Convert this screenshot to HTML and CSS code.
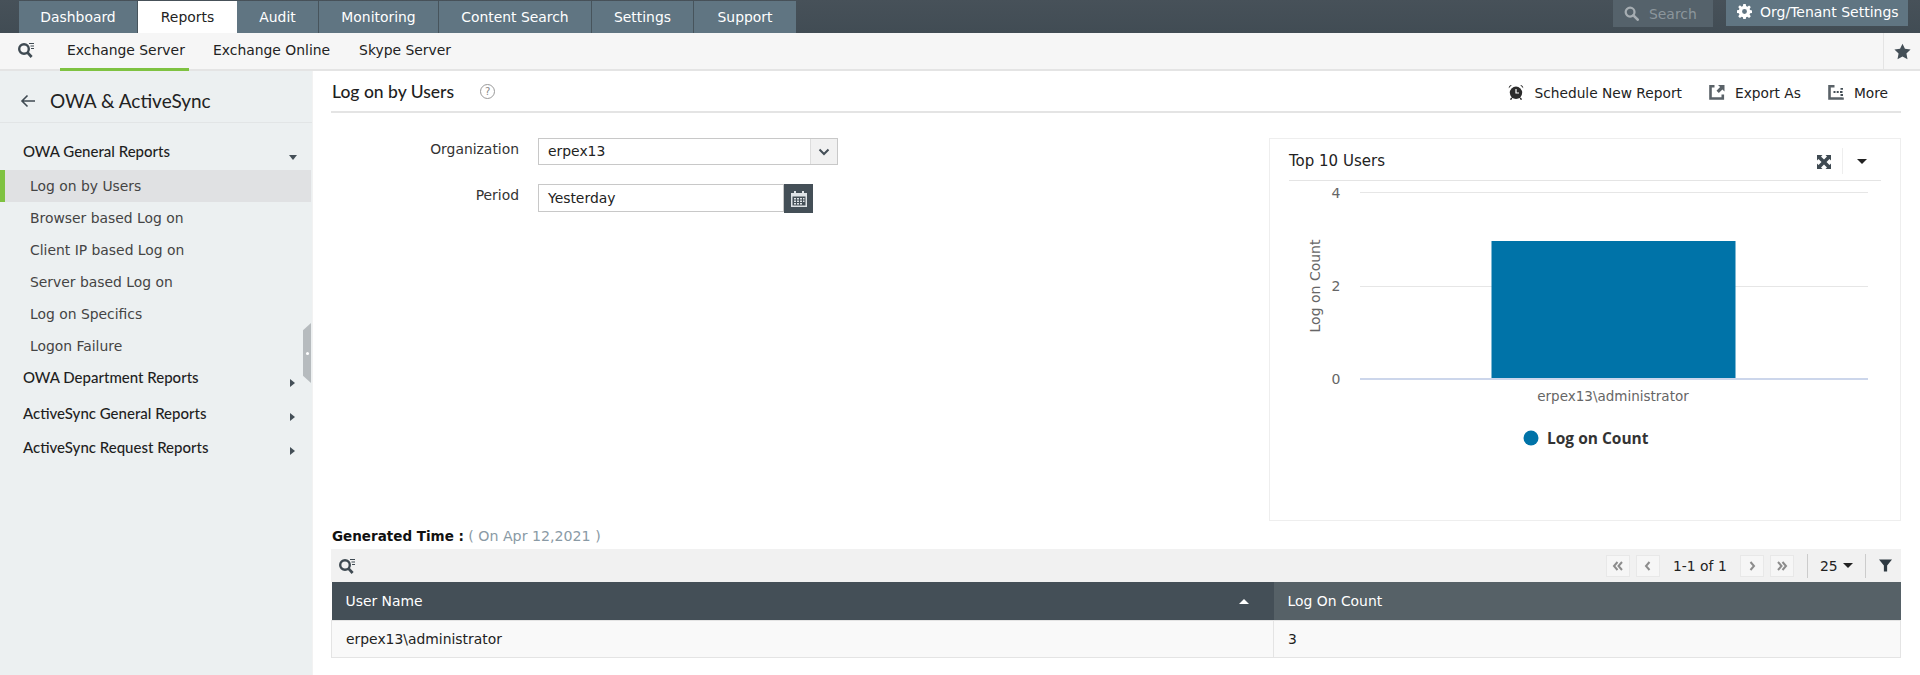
FILE: index.html
```html
<!DOCTYPE html>
<html lang="en">
<head>
<meta charset="utf-8">
<title>Log on by Users</title>
<link rel="stylesheet" href="styles.css">
</head>
<body>
<header class="topbar">
  <nav class="tabs">
    <a class="tab tab-dashboard">Dashboard</a>
    <a class="tab tab-reports active">Reports</a>
    <a class="tab tab-audit">Audit</a>
    <a class="tab tab-monitoring">Monitoring</a>
    <a class="tab tab-content">Content Search</a>
    <a class="tab tab-settings">Settings</a>
    <a class="tab tab-support">Support</a>
  </nav>
  <div class="top-search">
    <svg class="i-search" viewBox="0 0 16 16"><circle cx="6.5" cy="6.5" r="4.7" fill="none" stroke="#a6adb2" stroke-width="2.4"/><path d="M10 10l4.6 4.6" stroke="#a6adb2" stroke-width="2.8" stroke-linecap="round"/></svg>
    <span>Search</span>
  </div>
  <button class="org-btn">
    <svg class="i-gear" viewBox="0 0 16 16"><path fill="#fff" fill-rule="evenodd" d="M6.7 0h2.6l.4 2.2 1.3.6 1.9-1.3 1.8 1.8-1.3 1.9.6 1.3 2 .4v2.6l-2 .4-.6 1.3 1.3 1.9-1.8 1.8-1.9-1.3-1.3.6-.4 2H6.7l-.4-2-1.3-.6-1.9 1.3-1.8-1.8 1.3-1.9-.6-1.3-2-.4V6.7l2-.4.6-1.3-1.3-1.9 1.8-1.8L5 2.8l1.3-.6zM8 5.4a2.6 2.6 0 100 5.2 2.6 2.6 0 000-5.2z"/></svg>
    Org/Tenant Settings
  </button>
</header>

<div class="subbar">
  <svg class="i-qsearch" viewBox="0 0 18 18"><circle cx="7" cy="8" r="4.8" fill="none" stroke="#3f4a52" stroke-width="2.4"/><path d="M10.6 11.6l4 4.4" stroke="#3f4a52" stroke-width="2.8"/><path d="M12 2.5h5M13.5 5h3.5M14 7.5h3" stroke="#3f4a52" stroke-width="1.2"/></svg>
  <a class="subtab active">Exchange Server</a>
  <a class="subtab">Exchange Online</a>
  <a class="subtab">Skype Server</a>
  <div class="star-cell">
    <svg class="i-star" viewBox="0 0 16 16"><path fill="#444f57" d="M8 .6l2.3 4.900 5.300.7-3.900 3.700 1 5.300L8 12.700l-4.700 2.500 1-5.300L.4 6.200l5.300-.7z"/></svg>
  </div>
</div>

<div class="layout">
  <aside class="sidebar">
    <div class="side-head">
      <svg class="i-back" viewBox="0 0 16 14"><path d="M15 7H2M7.500 1.500L2 7l5.500 5.500" fill="none" stroke="#3f4a52" stroke-width="1.600"/></svg>
      <span>OWA &amp; ActiveSync</span>
    </div>
    <div class="side-group open">OWA General Reports<i class="caret-down"></i></div>
    <a class="side-item selected">Log on by Users</a>
    <a class="side-item">Browser based Log on</a>
    <a class="side-item">Client IP based Log on</a>
    <a class="side-item">Server based Log on</a>
    <a class="side-item">Log on Specifics</a>
    <a class="side-item">Logon Failure</a>
    <div class="side-group g1">OWA Department Reports<i class="caret-right"></i></div>
    <div class="side-group g2">ActiveSync General Reports<i class="caret-right"></i></div>
    <div class="side-group g2">ActiveSync Request Reports<i class="caret-right"></i></div>
    <div class="side-handle"><span></span></div>
  </aside>

  <main class="content">
    <div class="title-row">
      <h1>Log on by Users</h1>
      <span class="help">?</span>
      <div class="actions">
        <a class="action">
          <svg class="i-clock" viewBox="0 0 16 16"><circle cx="8" cy="8.800" r="6.200" fill="#2b2b2b"/><path d="M8 5v4h3" fill="none" stroke="#fff" stroke-width="1.200"/><path d="M.8 4.200C.6 2.400 2 .9 3.800 1zM15.200 4.200C15.400 2.400 14 .9 12.200 1z" fill="#2b2b2b"/><path d="M3.800 14l-1.300 1.600M12.200 14l1.300 1.600" stroke="#2b2b2b" stroke-width="1.500"/></svg>
          Schedule New Report
        </a>
        <a class="action">
          <svg class="i-export" viewBox="0 0 16 16"><path d="M5.500 2.200H1.500v12.300h12.300v-4" fill="none" stroke="#5a6268" stroke-width="2.600"/><path fill="#5a6268" d="M9 1h6.500v6.500L13.400 5.400 9.800 9 7.500 6.700l3.600-3.600z"/></svg>
          Export As
        </a>
        <a class="action">
          <svg class="i-more" viewBox="0 0 16 16"><path d="M6.500 2.200H1.500v12.300h13v-1" fill="none" stroke="#5a6268" stroke-width="2.600"/><path d="M5.500 8h2M8.700 8h2M12 8h2.500M12.500 4.800h2.500M12.500 11h2.500" stroke="#444f57" stroke-width="1.800"/></svg>
          More
        </a>
      </div>
    </div>

    <div class="report-top">
      <form class="filters">
        <div class="field">
          <label>Organization</label>
          <div class="select"><span>erpex13</span><b class="select-btn"><svg viewBox="0 0 12 8"><path d="M1.500 1.500L6 6l4.500-4.500" fill="none" stroke="#444f57" stroke-width="2"/></svg></b></div>
        </div>
        <div class="field">
          <label>Period</label>
          <div class="date"><span>Yesterday</span></div>
          <b class="cal-btn"><svg viewBox="0 0 18 18"><path fill="#dfe3e6" d="M1 3h3V1h2v2h6V1h2v2h3v14H1z"/><path fill="#444f57" d="M2.500 6.500h13v9h-13z"/><path fill="#dfe3e6" d="M4 8h2v1.500H4zM7 8h2v1.500H7zM10 8h2v1.500h-2zM13 8h1.500v1.500H13zM4 10.500h2V12H4zM7 10.500h2V12H7zM10 10.500h2V12h-2zM13 10.500h1.500V12H13zM4 13h2v1.500H4zM7 13h2v1.500H7zM10 13h2v1.500h-2z"/></svg></b>
        </div>
      </form>

      <section class="chart-card">
        <div class="chart-head">
          <span class="chart-title">Top 10 Users</span>
          <svg class="i-expand" viewBox="0 0 14 14"><path fill="#3f4a52" d="M0 0h5.500L4 1.500l3 3 3-3L8.500 0H14v5.500L12.500 4l-3 3 3 3 1.500-1.500V14H8.500l1.500-1.500-3-3-3 3L5.500 14H0V8.500L1.500 10l3-3-3-3L0 5.500z"/></svg>
          <i class="head-sep"></i>
          <i class="head-caret"></i>
        </div>
        <svg class="chart" viewBox="0 0 631 340" width="631" height="340">
          <g class="grid">
            <path d="M90 11.500H598M90 105.500H598"/>
          </g>
          <path class="axis" d="M90 198H598"/>
          <rect class="bar" x="221.500" y="60" width="244" height="137"/>
          <text class="tick" x="66" y="17">4</text>
          <text class="tick" x="66" y="110">2</text>
          <text class="tick" x="66" y="203">0</text>
          <text class="ytitle" transform="translate(50 105) rotate(-90)">Log on Count</text>
          <text class="cat" x="343" y="220">erpex13\administrator</text>
          <circle class="dot" cx="261" cy="257" r="7.500"/>
          <text class="legend" x="277" y="263">Log on Count</text>
        </svg>
      </section>
    </div>

    <p class="gen-time"><strong>Generated Time :</strong> <span>( On Apr 12,2021 )</span></p>

    <div class="grid-tools">
      <svg class="i-qsearch small" viewBox="0 0 18 18"><circle cx="7" cy="8" r="4.800" fill="none" stroke="#3f4a52" stroke-width="2.400"/><path d="M10.600 11.600l4 4.400" stroke="#3f4a52" stroke-width="2.800"/><path d="M12 2.500h5M13.500 5h3.500M14 7.500h3" stroke="#3f4a52" stroke-width="1.200"/></svg>
      <div class="pager">
        <b class="pg"><svg viewBox="0 0 12 10"><path d="M5.500 1L2 5l3.500 4M10 1L6.500 5l3.500 4" fill="none" stroke="#8c8c8c" stroke-width="2"/></svg></b>
        <b class="pg"><svg viewBox="0 0 12 10"><path d="M7.500 1L4 5l3.500 4" fill="none" stroke="#8c8c8c" stroke-width="2"/></svg></b>
        <span class="pg-text">1-1 of 1</span>
        <b class="pg"><svg viewBox="0 0 12 10"><path d="M4.500 1L8 5 4.500 9" fill="none" stroke="#8c8c8c" stroke-width="2"/></svg></b>
        <b class="pg"><svg viewBox="0 0 12 10"><path d="M2 1l3.500 4L2 9M6.500 1L10 5 6.500 9" fill="none" stroke="#8c8c8c" stroke-width="2"/></svg></b>
        <i class="pg-sep"></i>
        <span class="pg-size">25<i class="mini-caret"></i></span>
        <i class="pg-sep"></i>
        <svg class="i-filter" viewBox="0 0 12 12"><path fill="#2f3a42" d="M0 .5h12L7.500 6v5.500h-3V6z"/></svg>
      </div>
    </div>
    <table class="data">
      <thead>
        <tr><th class="col-user">User Name<i class="sort-up"></i></th><th class="col-count">Log On Count</th></tr>
      </thead>
      <tbody>
        <tr><td>erpex13\administrator</td><td>3</td></tr>
      </tbody>
    </table>
  </main>
</div>
</body>
</html>
```
FILE: styles.css
```css
* { box-sizing: border-box; }
html, body { margin: 0; height: 675px; overflow: hidden; }
body { background: #fff; color: #222; font: 13.9px "DejaVu Sans", Verdana, sans-serif; }
a { color: inherit; text-decoration: none; }

.topbar { height: 33px; background: linear-gradient(#475159, #414c54); display: flex; align-items: flex-start; padding-left: 19px; }
.tabs { display: flex; height: 33px; padding-top: 1px; margin-right: auto; }
.tab { display: flex; align-items: center; justify-content: center; background: #607582; color: #fff; border-right: 1px solid #47545c; }
.tab-dashboard { width: 119px; }
.tab-reports { width: 99px; }
.tab-audit { width: 82px; }
.tab-monitoring { width: 120px; }
.tab-content { width: 153px; }
.tab-settings { width: 102px; }
.tab-support { width: 102px; border-right: 0; }
.tab.active { background: #fff; color: #222; border-right: 0; }

.top-search { width: 100px; height: 27px; background: #55626b; color: #8c969c; display: flex; align-items: center; padding-left: 11px; gap: 10px; margin-right: 13px; }
.i-search { width: 15px; height: 15px; }
.org-btn { width: 182px; height: 26px; border: 0; background: #607582; color: #fff; font: 14px "DejaVu Sans", sans-serif; display: flex; align-items: center; padding: 0 0 3px 11px; gap: 8px; margin-right: 12px; }
.i-gear { width: 15px; height: 15px; }

.subbar { height: 38px; background: #f6f6f6; border-bottom: 2px solid #e4e4e4; display: flex; align-items: stretch; padding-left: 17px; }
.i-qsearch { width: 18px; height: 18px; align-self: center; margin-right: 25px; margin-bottom: 2px; }
.subtab { padding: 0 7px; margin-right: 15px; line-height: 35px; height: 38px; border-bottom: 3px solid transparent; white-space: nowrap; }
.subtab.active { width: 129px; border-bottom-color: #7fc241; margin-right: 17px; padding: 0 0 0 7px; }
.star-cell { margin-left: auto; width: 37px; border-left: 1px solid #e4e4e4; display: flex; align-items: center; justify-content: center; padding-left: 1px; }
.i-star { width: 17px; height: 17px; }

.layout { display: flex; height: 604px; }
.sidebar { position: relative; width: 313px; flex: none; background: #ecf0f1; border-right: 1px solid #f2f2f2; }
.side-head { height: 52px; border-bottom: 1px solid #e2e5e6; display: flex; align-items: center; padding: 8px 0 0 20px; gap: 14px; font: 19px Lato, sans-serif; color: #222; }
.i-back { width: 16px; height: 14px; }
.side-group { position: relative; height: 47px; padding: 19px 0 0 23px; font: 500 15px/18px Lato, sans-serif; color: #1f1f1f; }
.side-group.g1 { height: 34px; padding-top: 6px; }
.side-group.g2 { height: 34px; padding-top: 8px; }
.caret-down { position: absolute; left: 289px; top: 32px; border: 4px solid transparent; border-top: 5px solid #444f57; border-bottom: 0; }
.caret-right { position: absolute; left: 290px; top: 17px; border: 4px solid transparent; border-left: 5px solid #444f57; border-right: 0; }
.side-item { display: block; height: 32px; line-height: 32px; padding-left: 30px; color: #444; width: 311px; }
.side-item.selected { background: #e0e1e3; border-left: 5px solid #7fc241; padding-left: 25px; }
.side-handle { position: absolute; left: 303px; top: 252px; width: 8px; height: 60px; background: #b6bbbe; clip-path: polygon(100% 0, 100% 100%, 0 88%, 0 12%); display: flex; align-items: center; justify-content: center; }
.side-handle span { width: 3px; height: 3px; background: #fff; border-radius: 50%; }

.content { flex: 1; min-width: 0; padding: 0 19px 0 18px; }
.title-row { height: 42px; border-bottom: 2px solid #e4e4e4; display: flex; align-items: center; }
.title-row h1 { margin: 0 0 0 1px; font: 500 17.5px Lato, sans-serif; color: #1f1f1f; }
.help { width: 15px; height: 15px; margin-left: 26px; border: 1px solid #999; border-radius: 50%; color: #888; font-size: 10px; line-height: 13px; text-align: center; }
.actions { margin-left: auto; display: flex; gap: 27px; padding-right: 13px; padding-top: 4px; font-size: 13.75px; }
.action { display: flex; align-items: center; gap: 10px; color: #222; }
.i-clock, .i-export, .i-more { width: 16px; height: 16px; margin-bottom: 2px; }

.report-top { display: flex; justify-content: space-between; height: 412px; padding-top: 25px; }
.field { display: flex; align-items: flex-start; height: 46px; }
.field label { width: 188px; text-align: right; margin-right: 19px; padding-top: 2px; color: #333; line-height: 18px; }
.select { width: 300px; height: 27px; border: 1px solid #c8c8c8; display: flex; justify-content: space-between; }
.select span, .date span { padding-left: 9px; line-height: 25px; color: #222; }
.select-btn { width: 27px; height: 25px; background: #f1f1f1; border-left: 1px solid #ddd; display: flex; align-items: center; justify-content: center; }
.select-btn svg { width: 12px; height: 8px; }
.date { width: 246px; height: 28px; border: 1px solid #c8c8c8; }
.date span { line-height: 26px; }
.cal-btn { width: 29px; height: 29px; background: #444f57; display: flex; align-items: center; justify-content: center; }
.cal-btn svg { width: 18px; height: 18px; }

.chart-card { width: 632px; height: 383px; border: 1px solid #eee; }
.chart-head { height: 42px; margin: 0 19px; border-bottom: 1px solid #e4e4e4; display: flex; align-items: center; }
.chart-title { font-size: 15px; color: #222; padding-top: 2px; }
.i-expand { width: 14px; height: 14px; margin-left: auto; margin-right: 11px; margin-top: 5px; }
.head-sep { width: 1px; height: 26px; background: #eee; margin-right: 14px; margin-top: 3px; }
.head-caret { border: 5px solid transparent; border-top: 5px solid #222; border-bottom: 0; margin-right: 14px; margin-top: 4px; }
.chart { display: block; }
.grid path { stroke: #e6e6e6; stroke-width: 1; fill: none; }
.axis { stroke: #ccd6eb; stroke-width: 2; }
.bar { fill: #0073a8; }
.tick, .ytitle { font: 14px "DejaVu Sans", sans-serif; fill: #666; text-anchor: middle; }
.cat { font: 13.5px "DejaVu Sans", sans-serif; fill: #666; text-anchor: middle; }
.dot { fill: #0073a8; }
.legend { font: 700 15.5px "Open Sans", sans-serif; fill: #333; }

.gen-time { margin: 0; height: 24px; line-height: 23px; padding-left: 1px; font-size: 13.5px; }
.gen-time strong { color: #111; }
.gen-time span { color: #8a9aa5; font-size: 14.2px; }

.grid-tools { height: 33px; background: #f1f1f1; display: flex; align-items: center; padding-left: 7px; }
.i-qsearch.small { margin: 0; width: 18px; height: 18px; }
.pager { margin-left: auto; display: flex; align-items: center; }
.pg { width: 24px; height: 22px; background: #f6f6f6; border: 1px solid #e8e8e8; display: flex; align-items: center; justify-content: center; margin-right: 6px; }
.pg svg { width: 12px; height: 10px; }
.pg-text { width: 67px; margin-left: 7px; }
.pg-sep { width: 1px; height: 24px; background: #ccc; margin-left: 7px; margin-right: 12px; }
.pg-sep + .pg-size + .pg-sep { margin-left: 12px; margin-right: 13px; }
.pg-size { display: flex; align-items: center; gap: 5px; width: 33px; }
.mini-caret { border: 5px solid transparent; border-top: 5px solid #222; border-bottom: 0; }
.i-filter { width: 13px; height: 13px; margin-right: 9px; }

.data { width: 100%; border-collapse: collapse; table-layout: fixed; }
.data th { height: 38px; padding: 0 14px; text-align: left; font-weight: 400; color: #fff; background: #444f57; position: relative; }
.data th.col-user { width: 942px; }
.data th.col-count { background: #566167; }
.sort-up { position: absolute; right: 25px; top: 17px; border: 5px solid transparent; border-bottom: 5px solid #fff; border-top: 0; }
.data td { height: 37px; padding: 0 14px; background: #f9f9f9; border: 1px solid #e4e4e4; color: #222; }
```
